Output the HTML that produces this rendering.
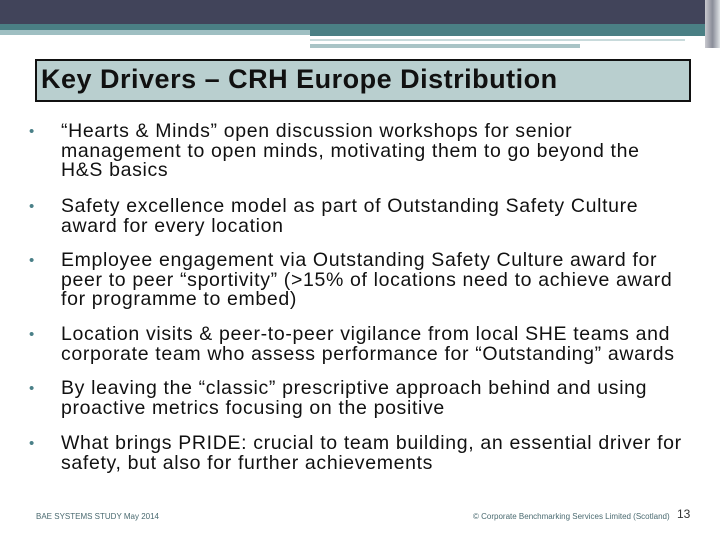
<!DOCTYPE html><html><head><style>
body{margin:0;width:720px;height:540px;position:relative;background:#fff;font-family:"Liberation Sans",sans-serif;overflow:hidden}
.a{position:absolute}
.b{position:absolute;left:61px;font-size:19.5px;line-height:19.5px;color:#111;white-space:nowrap;letter-spacing:0.65px}
.b:before{content:"•";position:absolute;left:-32px;color:#4a8088;font-size:15px}
</style></head><body>
<div class="a" style="left:0;top:0;width:705px;height:24px;background:#41445a"></div>
<div class="a" style="left:0;top:24px;width:705px;height:8px;background:#4a7f84"></div>
<div class="a" style="left:0;top:30px;width:310px;height:5px;background:#9fbfc2"></div>
<div class="a" style="left:310px;top:32px;width:395px;height:4px;background:#4a7f84"></div>
<div class="a" style="left:310px;top:39px;width:375px;height:2px;background:#c8dadb"></div>
<div class="a" style="left:310px;top:44px;width:270px;height:4px;background:#a9c4c6"></div>
<div class="a" style="left:705px;top:0;width:15px;height:48px;background:linear-gradient(90deg,#c9c9cf,#8a8d99,#dfe3e6)"></div>
<div class="a" style="left:35px;top:59px;width:652px;height:39px;border:2px solid #111;background:#b9cfcf"></div>
<div class="a" style="left:41px;top:64px;font-size:27px;font-weight:bold;color:#111;letter-spacing:0.5px">Key Drivers – CRH Europe Distribution</div>
<div class="b" style="top:122px">“Hearts &amp; Minds” open discussion workshops for senior<br>management to open minds, motivating them to go beyond the<br>H&amp;S basics</div>
<div class="b" style="top:197px">Safety excellence model as part of Outstanding Safety Culture<br>award for every location</div>
<div class="b" style="top:251px">Employee engagement via Outstanding Safety Culture award for<br>peer to peer “sportivity” (&gt;15% of locations need to achieve award<br>for programme to embed)</div>
<div class="b" style="top:325px">Location visits &amp; peer-to-peer vigilance from local SHE teams and<br>corporate team who assess performance for “Outstanding” awards</div>
<div class="b" style="top:379px">By leaving the “classic” prescriptive approach behind and using<br>proactive metrics focusing on the positive</div>
<div class="b" style="top:434px">What brings PRIDE: crucial to team building, an essential driver for<br>safety, but also for further achievements</div>
<div class="a" style="left:36px;top:512px;font-size:8px;color:#4a6a70">BAE SYSTEMS STUDY May 2014</div>
<div class="a" style="left:473px;top:512px;font-size:8px;color:#4a6a70">© Corporate Benchmarking Services Limited (Scotland)</div>
<div class="a" style="left:677px;top:507px;font-size:12px;color:#333">13</div>
</body></html>
